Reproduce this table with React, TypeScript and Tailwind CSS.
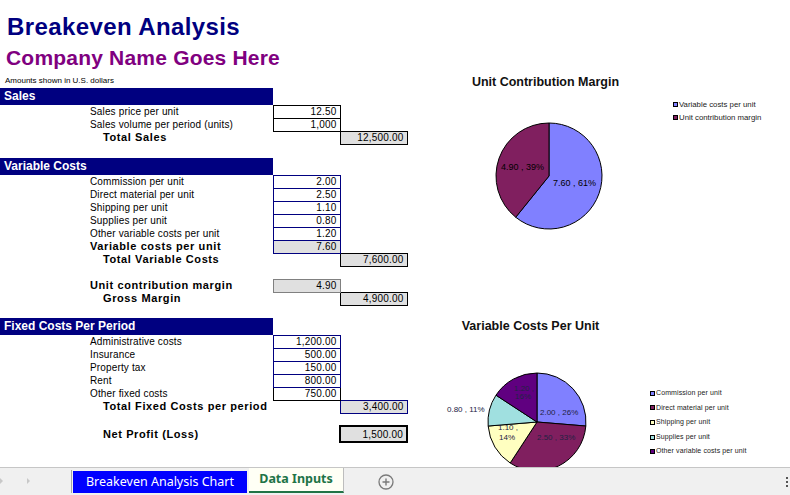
import React from "react";

const navy = "#000080";

type Border = "black" | "navy" | "gray" | "thick";

const borderCls: Record<Border, string> = {
  black: "border border-black",
  navy: "border border-[#000080]",
  gray: "border border-[#808080]",
  thick: "border-2 border-black",
};

function Header({ title }: { title: string }) {
  return (
    <tr className="h-[17px]">
      <td colSpan={2} className="p-0 pl-[4px] bg-[#000080] text-white text-[12px] leading-[15px] font-bold">
        {title}
      </td>
      <td className="p-0" />
      <td className="p-0" />
    </tr>
  );
}

function Blank({ tall }: { tall?: boolean }) {
  return (
    <tr className={tall ? "h-[14px]" : "h-[13px]"}>
      <td colSpan={4} className="p-0" />
    </tr>
  );
}

function Line({
  label,
  value,
  total = false,
  border = "black",
  fill = false,
  bold = false,
  indent = false,
  big = false,
}: {
  label: string;
  value: string;
  total?: boolean;
  border?: Border;
  fill?: boolean;
  bold?: boolean;
  indent?: boolean;
  big?: boolean;
}) {
  const box = `p-0 pr-[3px] text-right text-[10px] leading-[11px] tracking-[0.2px] ${borderCls[border]} ${
    fill ? "bg-[#e0e0e0]" : "bg-white"
  }`;
  return (
    <tr className={big ? "h-[16px]" : "h-[13px]"}>
      <td className="p-0" />
      <td
        className={`p-0 whitespace-nowrap leading-[11px] ${
          bold ? "text-[11px] font-bold tracking-[0.6px]" : "text-[10px] tracking-[0.15px]"
        } ${indent ? "pl-[13px]" : ""}`}
      >
        {label}
      </td>
      {total ? <td className="p-0" /> : <td className={box}>{value}</td>}
      {total ? <td className={box}>{value}</td> : <td className="p-0" />}
    </tr>
  );
}

function Sheet() {
  return (
    <div className="w-[420px] shrink-0">
      <div
        className="h-[40px] pt-[13px] pl-[7px] text-[24px] leading-[27px] font-bold tracking-[0.4px]"
        style={{ color: navy }}
      >
        Breakeven Analysis
      </div>
      <div className="h-[30px] pt-[6px] pl-[6px] text-[21px] leading-[24px] font-bold tracking-[0.2px] text-[#800080]">
        Company Name Goes Here
      </div>
      <div className="h-[18px] pt-[6px] pl-[5px] text-[8px] leading-[10px]">Amounts shown in U.S. dollars</div>
      <table className="border-collapse table-fixed w-[407px]">
        <colgroup>
          <col className="w-[90px]" />
          <col className="w-[183px]" />
          <col className="w-[67px]" />
          <col className="w-[67px]" />
        </colgroup>
        <tbody>
          <Header title="Sales" />
          <Line label="Sales price per unit" value="12.50" />
          <Line label="Sales volume per period (units)" value="1,000" />
          <Line label="Total Sales" value="12,500.00" total fill bold indent />
          <Blank tall />
          <Header title="Variable Costs" />
          <Line label="Commission per unit" value="2.00" border="navy" />
          <Line label="Direct material per unit" value="2.50" border="navy" />
          <Line label="Shipping per unit" value="1.10" border="navy" />
          <Line label="Supplies per unit" value="0.80" border="navy" />
          <Line label="Other variable costs per unit" value="1.20" border="navy" />
          <Line label="Variable costs per unit" value="7.60" border="navy" fill bold />
          <Line label="Total Variable Costs" value="7,600.00" total fill bold indent />
          <Blank />
          <Line label="Unit contribution margin" value="4.90" border="gray" fill bold />
          <Line label="Gross Margin" value="4,900.00" total fill bold indent />
          <Blank />
          <Header title="Fixed Costs Per Period" />
          <Line label="Administrative costs" value="1,200.00" border="navy" />
          <Line label="Insurance" value="500.00" border="navy" />
          <Line label="Property tax" value="150.00" border="navy" />
          <Line label="Rent" value="800.00" border="navy" />
          <Line label="Other fixed costs" value="750.00" />
          <Line label="Total Fixed Costs per period" value="3,400.00" total fill bold indent border="navy" />
          <Blank />
          <Line label="Net Profit (Loss)" value="1,500.00" total fill bold indent border="thick" big />
        </tbody>
      </table>
    </div>
  );
}

function arc(cx: number, cy: number, r: number, a0: number, a1: number) {
  const pt = (a: number) => [cx + r * Math.sin(a), cy - r * Math.cos(a)];
  const [x0, y0] = pt(a0);
  const [x1, y1] = pt(a1);
  const large = a1 - a0 > Math.PI ? 1 : 0;
  return `M${cx},${cy} L${x0},${y0} A${r},${r} 0 ${large} 1 ${x1},${y1} Z`;
}

function Pie({ cx, cy, r, values, colors }: { cx: number; cy: number; r: number; values: number[]; colors: string[] }) {
  const total = values.reduce((a, b) => a + b, 0);
  let acc = 0;
  return (
    <g>
      {values.map((v, i) => {
        const a0 = (acc / total) * Math.PI * 2;
        acc += v;
        const a1 = (acc / total) * Math.PI * 2;
        return <path key={i} d={arc(cx, cy, r, a0, a1)} fill={colors[i]} stroke="#000" strokeWidth={1} strokeLinejoin="round" />;
      })}
    </g>
  );
}

const label = { fontFamily: "'Liberation Sans', Arial, sans-serif", fill: "#000" };
const label2 = { fontFamily: "'Liberation Sans', Arial, sans-serif", fill: "#222244" };

function Charts() {
  return (
    <div className="flex-1 flex flex-col pt-[74px]">
      {/* Unit contribution margin */}
      <div className="w-[251px] h-[16px] text-center text-[12.5px] leading-[16px] font-bold text-[#111]">
        Unit Contribution Margin
      </div>
      <div className="flex">
        <svg width={250} height={140} className="shrink-0">
          <Pie cx={129} cy={86} r={53} values={[7.6, 4.9]} colors={["#8080ff", "#801f5f"]} />
          <text x={81} y={78} fontSize={9} dominantBaseline="middle" {...label}>
            4.90 , 39%
          </text>
          <text x={133} y={94} fontSize={9} dominantBaseline="middle" {...label}>
            7.60 , 61%
          </text>
        </svg>
        <div className="pl-[3px] pt-[8px] text-[7.8px] text-[#222]">
          <div className="h-[13px] flex items-center gap-[1px]">
            <span className="w-[5px] h-[5px] border border-black bg-[#8080ff]" />
            Variable costs per unit
          </div>
          <div className="h-[13px] flex items-center gap-[1px]">
            <span className="w-[5px] h-[5px] border border-black bg-[#801f5f]" />
            Unit contribution margin
          </div>
        </div>
      </div>

      {/* Variable costs per unit */}
      <div className="mt-[88px] w-[221px] h-[16px] text-center text-[12.5px] leading-[16px] font-bold text-[#111]">
        Variable Costs Per Unit
      </div>
      <div className="flex">
        <svg width={230} height={140} className="shrink-0">
          <Pie
            cx={117}
            cy={88}
            r={49}
            values={[2.0, 2.5, 1.1, 0.8, 1.2]}
            colors={["#8080ff", "#801f5f", "#ffffc0", "#a0e0e0", "#600080"]}
          />
          <text x={120} y={79} fontSize={8} dominantBaseline="middle" {...label2}>
            2.00 , 26%
          </text>
          <text x={117} y={104} fontSize={8} dominantBaseline="middle" {...label2}>
            2.50 , 33%
          </text>
          <text x={88} y={94} fontSize={8} textAnchor="middle" dominantBaseline="middle" {...label2}>
            1.10 ,
          </text>
          <text x={87} y={104} fontSize={8} textAnchor="middle" dominantBaseline="middle" {...label2}>
            14%
          </text>
          <text x={104} y={55} fontSize={8} textAnchor="middle" dominantBaseline="middle" {...label2}>
            1.20 ,
          </text>
          <text x={103} y={63} fontSize={8} textAnchor="middle" dominantBaseline="middle" {...label2}>
            16%
          </text>
          <text x={27} y={76} fontSize={8} dominantBaseline="middle" {...label2}>
            0.80 , 11%
          </text>
        </svg>
        <div className="pt-[52px] text-[7px] text-[#222] tracking-[0.1px]">
          {[
            ["#8080ff", "Commission per unit"],
            ["#801f5f", "Direct material per unit"],
            ["#ffffc0", "Shipping per unit"],
            ["#a0e0e0", "Supplies per unit"],
            ["#600080", "Other variable costs per unit"],
          ].map(([c, t]) => (
            <div key={t} className="h-[14.6px] flex items-center gap-[1px]">
              <span className="w-[5px] h-[5px] border border-black" style={{ background: c }} />
              {t}
            </div>
          ))}
        </div>
      </div>
    </div>
  );
}

function TabBar() {
  return (
    <div className="h-[28px] shrink-0 border-t border-[#c6c6c6] bg-[#f0f0f0] flex items-start">
      <div className="w-[71px] h-[27px] relative">
        <svg width={71} height={27} className="absolute left-0 top-0">
          <path d="M0,10 L3,13 L0,16 Z" fill="#c8c8c8" />
          <path d="M27,10 L30,13 L27,16 Z" fill="#c8c8c8" />
        </svg>
      </div>
      <div className="w-px h-[23px] mt-[2px] bg-[#a6a6a6]" />
      <div className="ml-px mt-[3px] w-[174px] h-[22px] bg-[#0000ff] text-white text-[12.5px] flex items-center justify-center font-['Noto_Sans',sans-serif]">
        Breakeven Analysis Chart
      </div>
      <div className="ml-[2px] w-[95px] h-[25px] bg-[#fffff5] border-r border-[#bdbdbd] border-b-2 border-b-[#217346] text-[#217346] text-[12.5px] font-bold flex items-center justify-center font-['Noto_Sans',sans-serif]">
        Data Inputs
      </div>
      <svg width={16} height={16} className="ml-[34px] mt-[6px]">
        <circle cx={8} cy={8} r={7} fill="none" stroke="#7a7a7a" strokeWidth={1.3} />
        <path d="M8,4.5 V11.5 M4.5,8 H11.5" stroke="#7a7a7a" strokeWidth={1.4} />
      </svg>
      <div className="ml-auto mr-[2px] mt-[9px] flex flex-col gap-[2px]">
        <span className="w-[2px] h-[2px] bg-[#555]" />
        <span className="w-[2px] h-[2px] bg-[#555]" />
        <span className="w-[2px] h-[2px] bg-[#555]" />
      </div>
    </div>
  );
}

export default function App() {
  return (
    <div className="w-[790px] h-[495px] bg-white overflow-hidden flex flex-col font-['Liberation_Sans',Arial,sans-serif] text-black">
      <div className="h-[467px] flex overflow-hidden">
        <Sheet />
        <Charts />
      </div>
      <TabBar />
    </div>
  );
}
